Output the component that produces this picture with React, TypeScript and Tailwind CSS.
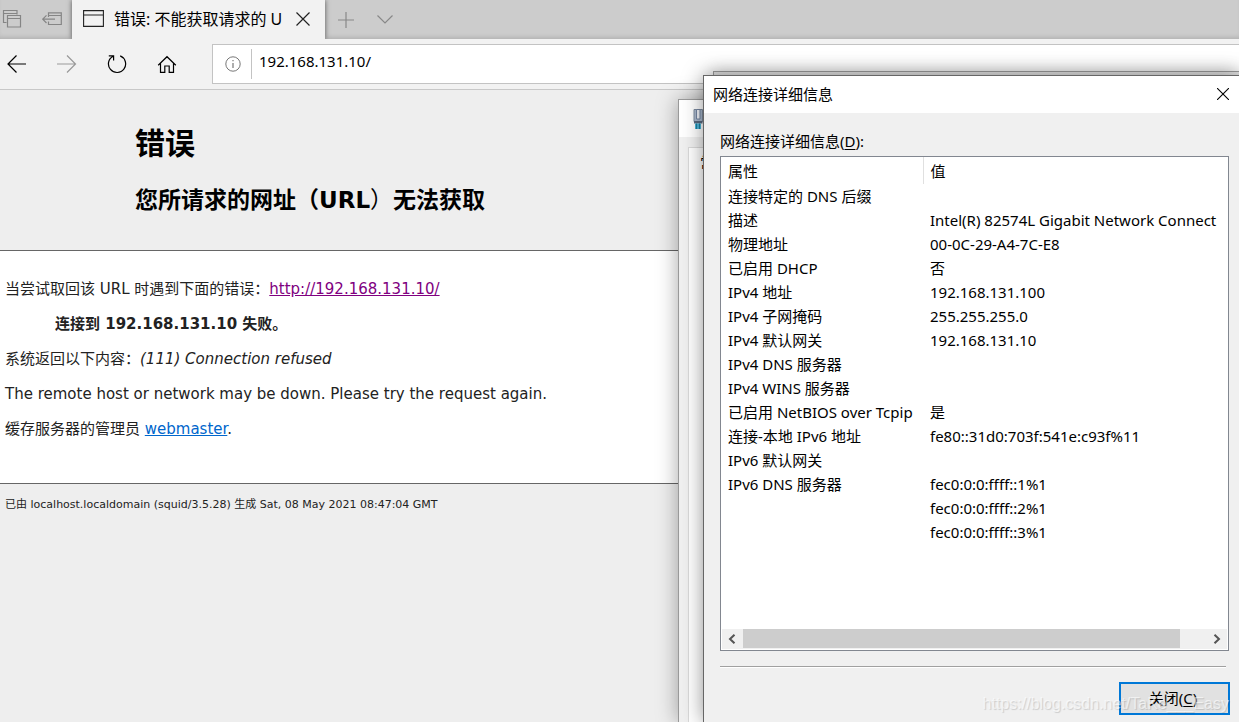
import React from "react";

const details: [string, string][] = [
  ["连接特定的 DNS 后缀", ""],
  ["描述", "Intel(R) 82574L Gigabit Network Connect"],
  ["物理地址", "00-0C-29-A4-7C-E8"],
  ["已启用 DHCP", "否"],
  ["IPv4 地址", "192.168.131.100"],
  ["IPv4 子网掩码", "255.255.255.0"],
  ["IPv4 默认网关", "192.168.131.10"],
  ["IPv4 DNS 服务器", ""],
  ["IPv4 WINS 服务器", ""],
  ["已启用 NetBIOS over Tcpip", "是"],
  ["连接-本地 IPv6 地址", "fe80::31d0:703f:541e:c93f%11"],
  ["IPv6 默认网关", ""],
  ["IPv6 DNS 服务器", "fec0:0:0:ffff::1%1"],
  ["", "fec0:0:0:ffff::2%1"],
  ["", "fec0:0:0:ffff::3%1"],
];

function Icon({ d, color = "text-black" }: { d: string; color?: string }) {
  return (
    <svg viewBox="0 0 20 20" className={`${color} size-5 shrink-0`} fill="none" stroke="currentColor" strokeWidth="1.2" aria-hidden="true">
      <path d={d} />
    </svg>
  );
}

function TabStrip() {
  return (
    <div className="flex h-[39px] items-stretch bg-[#cccccc] shadow-[inset_0_-4px_4px_-2px_rgba(0,0,0,0.12)]">
      <div className="flex w-[72px] shrink-0 items-center justify-between pb-px pl-[2px] pr-[10px]">
        <button aria-label="已搁置的标签页">
          <Icon color="text-[#858585]" d="M4.5 13.5H1.5V1.5H15V5.5M1.5 4.5H15M5.5 6.5H18.5V18H5.5ZM5.5 9.5H18.5" />
        </button>
        <button aria-label="搁置标签页">
          <Icon color="text-[#858585]" d="M6.5 8V3.8H19.3V15.5H6.5V12.5M6.5 6.5H19.3M13 10.2H.7M4.5 6.4L.7 10.2L4.5 14" />
        </button>
      </div>
      <div className="flex w-[253px] shrink-0 items-center bg-[#f2f2f2] pb-[2px] pl-[11px] pr-3 shadow-[0_0_5px_rgba(0,0,0,0.6)] [clip-path:inset(0_-8px_0_-8px)]">
        <svg viewBox="0 0 21 17" className="h-[17px] w-[21px] shrink-0" fill="none" stroke="#222" strokeWidth="1.1">
          <path d="M.6 .6H20.4V16.4H.6ZM.6 5H20.4" />
        </svg>
        <span className="ml-[10px] w-[176px] overflow-hidden whitespace-nowrap text-base">错误: 不能获取请求的 U</span>
        <button aria-label="关闭标签页" className="ml-1">
          <Icon color="text-[#222]" d="M3.5 3.5L16.5 16.5M16.5 3.5L3.5 16.5" />
        </button>
      </div>
      <div className="flex items-center gap-[19px] pl-[11px]">
        <button aria-label="新建标签页">
          <Icon color="text-[#888]" d="M10 2V18M2 10H18" />
        </button>
        <button aria-label="标签页列表">
          <Icon color="text-[#888]" d="M2.5 5.5L10 13L17.5 5.5" />
        </button>
      </div>
    </div>
  );
}

function Toolbar() {
  return (
    <div className="flex h-[51px] items-center border-b border-[#c8c8c8] bg-[#f2f2f2]">
      <div className="flex w-[212px] shrink-0 items-center gap-[30px] pb-px pl-[7px]">
        <button aria-label="后退">
          <Icon d="M19 10H1M9.5 1.5L1 10L9.5 18.5" />
        </button>
        <button aria-label="前进">
          <Icon color="text-[#999]" d="M0 10H18.5M10 1.5L18.5 10L10 18.5" />
        </button>
        <button aria-label="刷新">
          <Icon d="M6.2 2.2A8.6 8.6 0 1 0 13.2 1.9M1.8 1.8H6.6V6.6" />
        </button>
        <button aria-label="主页">
          <Icon d="M1.2 11.2L10 2.7L18.8 11.2M3.5 9.3V18.3H7.8V12H12.2V18.3H16.5V9.3" />
        </button>
      </div>
      <div className="flex h-10 flex-1 items-center border border-r-0 border-[#c3c3c3] bg-white">
        <svg viewBox="0 0 16 16" className="ml-3 size-4 shrink-0" fill="none" stroke="#777">
          <circle cx="8" cy="8" r="7.2" />
          <path d="M8 7V12M8 4V5.3" strokeWidth="1.2" />
        </svg>
        <label className="ml-[10px] flex h-[30px] flex-1 border-l border-[#c3c3c3]">
          <input
            aria-label="地址"
            defaultValue="192.168.131.10/"
            className="w-full bg-transparent pb-[6px] pl-[7px] text-[15px] outline-none"
          />
        </label>
      </div>
    </div>
  );
}

function ErrorPage() {
  return (
    <main className="flex-1 bg-[#eeeeee] font-['DejaVu_Sans','Noto_Sans_CJK_SC',sans-serif] text-[15px] leading-[18px] text-[#222]">
      <header className="flex h-[160px] flex-col gap-5 pl-[135px] pt-8 text-black">
        <h1 className="text-[30px] font-bold leading-11">错误</h1>
        <h2 className="text-[23px] font-bold leading-7">
          您所请求的网址（URL<span className="font-normal">）</span>无法获取
        </h2>
      </header>
      <section className="flex h-[234px] flex-col gap-[17px] border-y border-[#666] bg-white pl-[5px] pt-[29px]">
        <p>
          当尝试取回该 URL 时遇到下面的错误：
          <a href="http://192.168.131.10/" className="text-[#800080] underline">http://192.168.131.10/</a>
        </p>
        <blockquote className="pl-[50px] font-bold">连接到 192.168.131.10 失败。</blockquote>
        <p>
          系统返回以下内容：<i>(111) Connection refused</i>
        </p>
        <p>The remote host or network may be down. Please try the request again.</p>
        <p>
          缓存服务器的管理员 <a href="mailto:webmaster" className="text-[#0066cc] underline">webmaster</a>.
        </p>
      </section>
      <footer className="pl-[5px] pt-[13px] text-[11px] leading-4">
        已由 localhost.localdomain (squid/3.5.28) 生成 Sat, 08 May 2021 08:47:04 GMT
      </footer>
    </main>
  );
}

function StatusWindow() {
  return (
    <div className="absolute bottom-0 left-[678px] right-0 top-[99px] flex flex-col border-l border-t border-[#999] bg-[#f0f0f0] shadow-[0_0_20px_rgba(0,0,0,0.35)]">
      <div className="flex h-[37px] shrink-0 items-center bg-white pl-[13px]">
        <svg viewBox="0 0 12 21" className="h-[21px] w-3">
          <path d="M2 1.5H10.5V13.5H2Z" fill="#a9b8cc" stroke="#7d8a9c" />
          <path d="M4.5 1.5H8V11H4.5Z" fill="#f0f3f8" stroke="#7484a0" />
          <path d="M2 13H10.5V15.5H2Z" fill="#59697f" />
          <path d="M3 15.5H9V21H3Z" fill="#49b4d8" />
          <path d="M4.5 15.5V21M7.5 15.5V21" stroke="#1b7d9c" />
        </svg>
      </div>
      <div className="ml-[9px] mt-[10px] flex-1 border-l border-t border-[#d9d9d9] bg-white pl-[11px] pt-[3px] text-[15px]">常规</div>
    </div>
  );
}

function DetailsDialog() {
  return (
    <section
      role="dialog"
      aria-label="网络连接详细信息"
      className="absolute bottom-0 left-[703px] right-0 top-[75px] flex flex-col border-l border-t border-[#666] bg-[#f0f0f0] text-[15px] leading-6 shadow-[0_0_20px_rgba(0,0,0,0.4)]"
    >
      <div className="flex h-[37px] shrink-0 items-center justify-between bg-white pb-[2px] pl-[9px] pr-[10px]">
        <h2>网络连接详细信息</h2>
        <button aria-label="关闭">
          <svg viewBox="0 0 12 12" className="size-3" stroke="#000" strokeWidth="1.1">
            <path d="M0 0L12 12M12 0L0 12" />
          </svg>
        </button>
      </div>
      <div className="flex min-h-0 flex-1 flex-col pl-4 pr-[10px] pt-4">
        <h3 id="details-label">
          网络连接详细信息(<u className="underline-offset-2">D</u>):
        </h3>
        <div className="mt-[3px] flex h-[495px] shrink-0 flex-col border border-[#828790] bg-white px-px pb-px">
          <div className="flex-1 overflow-hidden">
            <table aria-labelledby="details-label" className="w-full table-fixed whitespace-nowrap text-left">
              <thead>
                <tr className="h-[27px]">
                  <th className="w-[201px] border-r border-[#e0e0e0] p-0 pl-[6px] font-normal">属性</th>
                  <th className="p-0 pl-[7px] font-normal">值</th>
                </tr>
              </thead>
              <tbody>
                {details.map(([name, value], i) => (
                  <tr key={i} className="h-6">
                    <td className="p-0 pl-[6px]">{name}</td>
                    <td className="p-0 pl-[7px]">{value}</td>
                  </tr>
                ))}
              </tbody>
            </table>
          </div>
          <div className="flex h-5 bg-[#f0f0f0]">
            <button aria-label="向左滚动" className="flex w-[21px] items-center pl-[6px]">
              <svg viewBox="0 0 8 10" className="h-[10px] w-2" fill="none" stroke="#555" strokeWidth="2">
                <path d="M6.5 .7L2 5L6.5 9.3" />
              </svg>
            </button>
            <div className="mb-px flex-1 bg-[#cdcdcd]" />
            <button aria-label="向右滚动" className="flex w-[47px] items-center justify-end pr-[6px]">
              <svg viewBox="0 0 8 10" className="h-[10px] w-2" fill="none" stroke="#555" strokeWidth="2">
                <path d="M1.5 .7L6 5L1.5 9.3" />
              </svg>
            </button>
          </div>
        </div>
        <hr className="mr-[3px] mt-[15px] h-[2px] border-b border-t border-b-white border-t-[#a0a0a0]" />
        <button className="-mr-px mt-[14px] h-[33px] w-[111px] self-end border-2 border-[#0078d7] bg-[#e1e1e1] pb-[2px] pr-[3px]">
          关闭(<u className="underline-offset-2">C</u>)
        </button>
      </div>
    </section>
  );
}

export default function App() {
  return (
    <div className="relative flex min-h-screen flex-col overflow-hidden font-['Noto_Sans','Noto_Sans_CJK_SC',sans-serif] text-black">
      <TabStrip />
      <Toolbar />
      <ErrorPage />
      <StatusWindow />
      <div className="absolute bottom-0 left-[713px] right-0 top-[71px] border-l border-t border-[#999] bg-[#e0e0e0] shadow-[0_0_16px_rgba(0,0,0,0.15)]" />
      <DetailsDialog />
      <div className="pointer-events-none absolute bottom-2 right-[10px] font-['Liberation_Sans',sans-serif] text-base leading-5 text-white/60 [text-shadow:1px_1px_1px_rgba(0,0,0,0.15)]">
        https://blog.csdn.net/TaKe___Easy
      </div>
    </div>
  );
}
